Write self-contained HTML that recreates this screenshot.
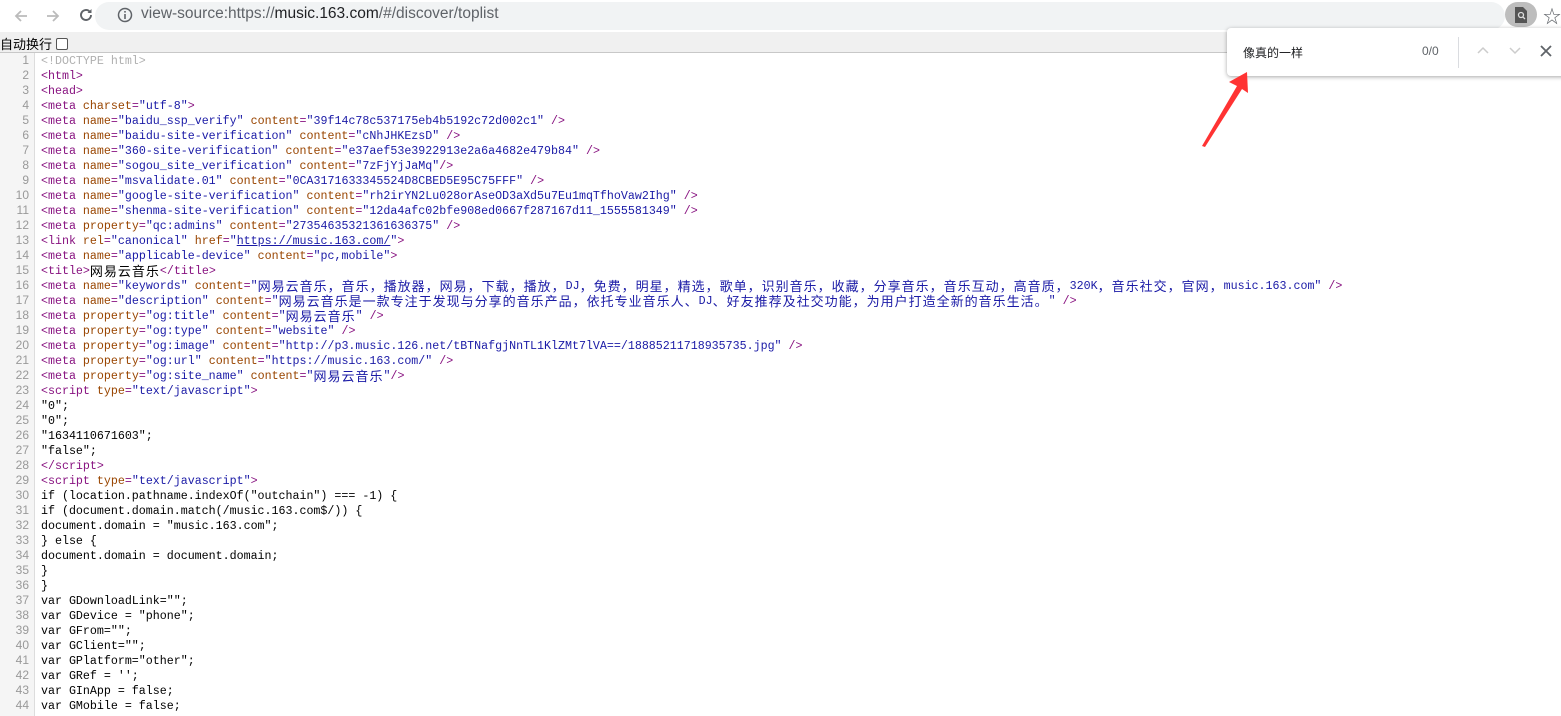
<!DOCTYPE html>
<html><head><meta charset="utf-8">
<style>
*{margin:0;padding:0;box-sizing:border-box}
body{width:1561px;height:716px;overflow:hidden;background:#fff;position:relative;font-family:"Liberation Sans","Noto Sans CJK SC",sans-serif}
.top{position:absolute;left:0;top:0;width:1561px;height:32px;background:#fff}
.omni{position:absolute;left:95px;top:2px;width:1410px;height:28px;background:#f1f3f4;border-radius:14px}
.url{position:absolute;left:141px;top:5px;font-size:15.5px;color:#5f6368;white-space:nowrap}
.url b{font-weight:normal;color:#202124}
.wrap{position:absolute;left:0;top:32px;width:1561px;height:21px;background:#f0f0f0;border-bottom:1px solid #c8c8c8;font-size:13px;color:#000;padding:2px 0 0 0;font-family:"Liberation Sans","Noto Sans CJK SC",sans-serif}
.cb{display:inline-block;width:12px;height:12px;border:1px solid #555;background:#fff;vertical-align:-1px;margin-left:4px;border-radius:2px}
.gut{position:absolute;left:0;top:53px;width:35px;height:663px;background:#f5f5f5;border-right:1px solid #ddd}
.lines{position:absolute;left:0;top:53px}
.l{height:15px;line-height:15px;white-space:pre;font-family:"Liberation Mono","Noto Sans CJK SC",monospace;font-size:11.65px;color:#000;position:relative;overflow:hidden}
.n{display:inline-block;width:29px;text-align:right;color:#999;font-family:"Liberation Sans",sans-serif;font-size:12px;margin-right:12px}
.t{color:#881280}.a{color:#994500}.v{color:#1a1aa6}.c{color:#b0b0b0}
i{font-style:normal;font-size:13px;letter-spacing:1px;font-family:"Noto Sans CJK SC",sans-serif;line-height:15px;vertical-align:top}
u{color:#1a1aa6}
.find{position:absolute;left:1227px;top:28px;width:340px;height:48px;background:#fff;border-radius:4px;box-shadow:0 1px 4px rgba(0,0,0,.35)}
</style></head><body>
<div class="top">
<svg style="position:absolute;left:12px;top:7px" width="18" height="18" viewBox="0 0 18 18"><path d="M15 9H4M9 4L4 9l5 5" stroke="#bbb" stroke-width="1.8" fill="none"/></svg>
<svg style="position:absolute;left:44px;top:7px" width="18" height="18" viewBox="0 0 18 18"><path d="M3 9h11M9 4l5 5-5 5" stroke="#bbb" stroke-width="1.8" fill="none"/></svg>
<svg style="position:absolute;left:77px;top:6px" width="18" height="18" viewBox="0 0 18 18"><path d="M14 9a5 5 0 1 1-1.5-3.6" stroke="#5f6368" stroke-width="1.9" fill="none"/><path d="M14.5 3v4h-4z" fill="#5f6368"/></svg>
<div class="omni"></div>
<svg style="position:absolute;left:117px;top:7px" width="16" height="16" viewBox="0 0 16 16"><circle cx="8" cy="8" r="6.5" stroke="#5f6368" stroke-width="1.5" fill="none"/><rect x="7.2" y="7" width="1.6" height="5" fill="#5f6368"/><rect x="7.2" y="4" width="1.6" height="1.6" fill="#5f6368"/></svg>
<div class="url">view-source:https://<b>music.163.com</b>/#/discover/toplist</div>
<div style="position:absolute;left:1505px;top:2px;width:32px;height:25px;border-radius:13px;background:#bdbdbd"></div>
<svg style="position:absolute;left:1514px;top:7px" width="14" height="16" viewBox="0 0 14 16"><path d="M1 0h8l4 4v12H1z" fill="#555"/><circle cx="7" cy="8" r="2.5" stroke="#ddd" stroke-width="1.3" fill="none"/><path d="M9 10l2 2" stroke="#ddd" stroke-width="1.3"/></svg>
<div style="position:absolute;left:1543px;top:3px;font-size:18px;color:#5f6368">☆</div>
</div>
<div class="wrap">自动换行<span class="cb"></span></div>
<div class="gut"></div>
<div class="lines">
<div class="l"><span class="n">1</span><span class="c">&lt;!DOCTYPE html&gt;</span></div>
<div class="l"><span class="n">2</span><span class="t">&lt;html&gt;</span></div>
<div class="l"><span class="n">3</span><span class="t">&lt;head&gt;</span></div>
<div class="l"><span class="n">4</span><span class="t">&lt;meta </span><span class="a">charset</span><span class="t">=</span><span class="v">"utf-8"</span><span class="t">&gt;</span></div>
<div class="l"><span class="n">5</span><span class="t">&lt;meta </span><span class="a">name</span><span class="t">=</span><span class="v">"baidu_ssp_verify"</span> <span class="a">content</span><span class="t">=</span><span class="v">"39f14c78c537175eb4b5192c72d002c1"</span><span class="t"> /&gt;</span></div>
<div class="l"><span class="n">6</span><span class="t">&lt;meta </span><span class="a">name</span><span class="t">=</span><span class="v">"baidu-site-verification"</span> <span class="a">content</span><span class="t">=</span><span class="v">"cNhJHKEzsD"</span><span class="t"> /&gt;</span></div>
<div class="l"><span class="n">7</span><span class="t">&lt;meta </span><span class="a">name</span><span class="t">=</span><span class="v">"360-site-verification"</span> <span class="a">content</span><span class="t">=</span><span class="v">"e37aef53e3922913e2a6a4682e479b84"</span><span class="t"> /&gt;</span></div>
<div class="l"><span class="n">8</span><span class="t">&lt;meta </span><span class="a">name</span><span class="t">=</span><span class="v">"sogou_site_verification"</span> <span class="a">content</span><span class="t">=</span><span class="v">"7zFjYjJaMq"</span><span class="t">/&gt;</span></div>
<div class="l"><span class="n">9</span><span class="t">&lt;meta </span><span class="a">name</span><span class="t">=</span><span class="v">"msvalidate.01"</span> <span class="a">content</span><span class="t">=</span><span class="v">"0CA3171633345524D8CBED5E95C75FFF"</span><span class="t"> /&gt;</span></div>
<div class="l"><span class="n">10</span><span class="t">&lt;meta </span><span class="a">name</span><span class="t">=</span><span class="v">"google-site-verification"</span> <span class="a">content</span><span class="t">=</span><span class="v">"rh2irYN2Lu028orAseOD3aXd5u7Eu1mqTfhoVaw2Ihg"</span><span class="t"> /&gt;</span></div>
<div class="l"><span class="n">11</span><span class="t">&lt;meta </span><span class="a">name</span><span class="t">=</span><span class="v">"shenma-site-verification"</span> <span class="a">content</span><span class="t">=</span><span class="v">"12da4afc02bfe908ed0667f287167d11_1555581349"</span><span class="t"> /&gt;</span></div>
<div class="l"><span class="n">12</span><span class="t">&lt;meta </span><span class="a">property</span><span class="t">=</span><span class="v">"qc:admins"</span> <span class="a">content</span><span class="t">=</span><span class="v">"27354635321361636375"</span><span class="t"> /&gt;</span></div>
<div class="l"><span class="n">13</span><span class="t">&lt;link </span><span class="a">rel</span><span class="t">=</span><span class="v">"canonical"</span> <span class="a">href</span><span class="t">=</span><span class="v">"</span><u>https://music.163.com/</u><span class="v">"</span><span class="t">&gt;</span></div>
<div class="l"><span class="n">14</span><span class="t">&lt;meta </span><span class="a">name</span><span class="t">=</span><span class="v">"applicable-device"</span> <span class="a">content</span><span class="t">=</span><span class="v">"pc,mobile"</span><span class="t">&gt;</span></div>
<div class="l"><span class="n">15</span><span class="t">&lt;title&gt;</span><i>网易云音乐</i><span class="t">&lt;/title&gt;</span></div>
<div class="l"><span class="n">16</span><span class="t">&lt;meta </span><span class="a">name</span><span class="t">=</span><span class="v">"keywords"</span> <span class="a">content</span><span class="t">=</span><span class="v">"<i>网易云音乐，音乐，播放器，网易，下载，播放，</i>DJ<i>，免费，明星，精选，歌单，识别音乐，收藏，分享音乐，音乐互动，高音质，</i>320K<i>，音乐社交，官网，</i>music.163.com"</span><span class="t"> /&gt;</span></div>
<div class="l"><span class="n">17</span><span class="t">&lt;meta </span><span class="a">name</span><span class="t">=</span><span class="v">"description"</span> <span class="a">content</span><span class="t">=</span><span class="v">"<i>网易云音乐是一款专注于发现与分享的音乐产品，依托专业音乐人、</i>DJ<i>、好友推荐及社交功能，为用户打造全新的音乐生活。</i>"</span><span class="t"> /&gt;</span></div>
<div class="l"><span class="n">18</span><span class="t">&lt;meta </span><span class="a">property</span><span class="t">=</span><span class="v">"og:title"</span> <span class="a">content</span><span class="t">=</span><span class="v">"<i>网易云音乐</i>"</span><span class="t"> /&gt;</span></div>
<div class="l"><span class="n">19</span><span class="t">&lt;meta </span><span class="a">property</span><span class="t">=</span><span class="v">"og:type"</span> <span class="a">content</span><span class="t">=</span><span class="v">"website"</span><span class="t"> /&gt;</span></div>
<div class="l"><span class="n">20</span><span class="t">&lt;meta </span><span class="a">property</span><span class="t">=</span><span class="v">"og:image"</span> <span class="a">content</span><span class="t">=</span><span class="v">"http://p3.music.126.net/tBTNafgjNnTL1KlZMt7lVA==/18885211718935735.jpg"</span><span class="t"> /&gt;</span></div>
<div class="l"><span class="n">21</span><span class="t">&lt;meta </span><span class="a">property</span><span class="t">=</span><span class="v">"og:url"</span> <span class="a">content</span><span class="t">=</span><span class="v">"https://music.163.com/"</span><span class="t"> /&gt;</span></div>
<div class="l"><span class="n">22</span><span class="t">&lt;meta </span><span class="a">property</span><span class="t">=</span><span class="v">"og:site_name"</span> <span class="a">content</span><span class="t">=</span><span class="v">"<i>网易云音乐</i>"</span><span class="t">/&gt;</span></div>
<div class="l"><span class="n">23</span><span class="t">&lt;script </span><span class="a">type</span><span class="t">=</span><span class="v">"text/javascript"</span><span class="t">&gt;</span></div>
<div class="l"><span class="n">24</span>"0";</div>
<div class="l"><span class="n">25</span>"0";</div>
<div class="l"><span class="n">26</span>"1634110671603";</div>
<div class="l"><span class="n">27</span>"false";</div>
<div class="l"><span class="n">28</span><span class="t">&lt;/script&gt;</span></div>
<div class="l"><span class="n">29</span><span class="t">&lt;script </span><span class="a">type</span><span class="t">=</span><span class="v">"text/javascript"</span><span class="t">&gt;</span></div>
<div class="l"><span class="n">30</span>if (location.pathname.indexOf("outchain") === -1) {</div>
<div class="l"><span class="n">31</span>if (document.domain.match(/music.163.com$/)) {</div>
<div class="l"><span class="n">32</span>document.domain = "music.163.com";</div>
<div class="l"><span class="n">33</span>} else {</div>
<div class="l"><span class="n">34</span>document.domain = document.domain;</div>
<div class="l"><span class="n">35</span>}</div>
<div class="l"><span class="n">36</span>}</div>
<div class="l"><span class="n">37</span>var GDownloadLink="";</div>
<div class="l"><span class="n">38</span>var GDevice = "phone";</div>
<div class="l"><span class="n">39</span>var GFrom="";</div>
<div class="l"><span class="n">40</span>var GClient="";</div>
<div class="l"><span class="n">41</span>var GPlatform="other";</div>
<div class="l"><span class="n">42</span>var GRef = '';</div>
<div class="l"><span class="n">43</span>var GInApp = false;</div>
<div class="l"><span class="n">44</span>var GMobile = false;</div>
</div>
<div class="find">
<div style="position:absolute;left:16px;top:16px;font-size:12px;color:#202124">像真的一样</div>
<div style="position:absolute;left:195px;top:16px;font-size:12px;color:#5f6368">0/0</div>
<div style="position:absolute;left:231px;top:9px;width:1px;height:31px;background:#dadce0"></div>
<svg style="position:absolute;left:250px;top:18px" width="12" height="8" viewBox="0 0 12 8"><path d="M1 7l5-5 5 5" stroke="#ccc" stroke-width="1.5" fill="none"/></svg>
<svg style="position:absolute;left:282px;top:19px" width="12" height="8" viewBox="0 0 12 8"><path d="M1 1l5 5 5-5" stroke="#ccc" stroke-width="1.5" fill="none"/></svg>
<svg style="position:absolute;left:313px;top:17px" width="12" height="12" viewBox="0 0 12 12"><path d="M1 1l10 10M11 1L1 11" stroke="#5f6368" stroke-width="1.8"/></svg>
</div>
<svg style="position:absolute;left:1195px;top:68px" width="60" height="82" viewBox="0 0 60 82"><path d="M52 4L34 14l8 4L7 78l3 1 37-58 6 4z" fill="#f33"/></svg>
</body></html>
